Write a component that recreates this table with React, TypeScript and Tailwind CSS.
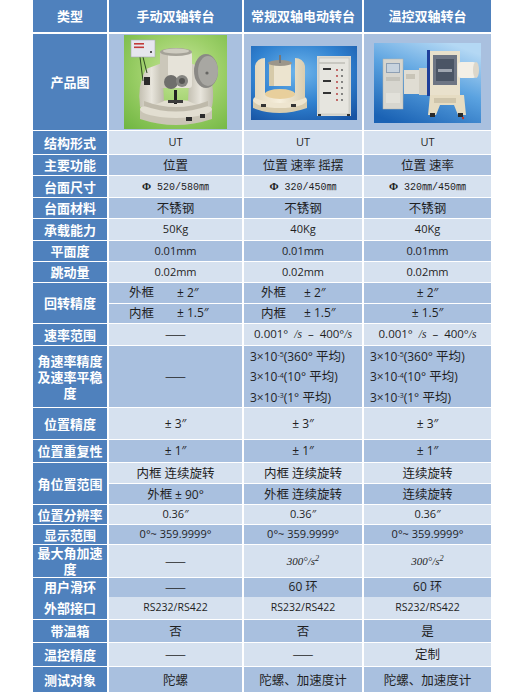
import React from "react";

type Tone = "light" | "dark";

const toneBg: Record<Tone, string> = {
	light: "bg-[#d6e1ef]",
	dark: "bg-[#a9c0df]",
};

function Label({ children }: { children: React.ReactNode }) {
	return (
		<div className="bg-[#4f81bd] text-white font-bold text-[13px] leading-[16px] flex items-center justify-center text-center px-[3px] font-['Noto_Sans_CJK_SC',sans-serif]">
			{children}
		</div>
	);
}

function Cell({
	tone,
	children,
	className = "",
}: {
	tone: Tone;
	children?: React.ReactNode;
	className?: string;
}) {
	return (
		<div className={`${toneBg[tone]} flex items-center justify-center text-[#1f1f1f] whitespace-nowrap ${className}`}>
			{children}
		</div>
	);
}

// a data column cut into two stacked cells
function Split({ tones, items, className = "" }: { tones: [Tone, Tone]; items: [React.ReactNode, React.ReactNode]; className?: string }) {
	return (
		<div className="flex flex-col gap-px">
			<Cell tone={tones[0]} className={`flex-1 ${className}`}>{items[0]}</Cell>
			<Cell tone={tones[1]} className={`flex-1 ${className}`}>{items[1]}</Cell>
		</div>
	);
}

function Row({ h, label, children }: { h: string; label: React.ReactNode; children: React.ReactNode }) {
	return (
		<div className={`grid grid-cols-[74px_133px_118px_127px] gap-x-[2px] ${h}`}>
			<Label>{label}</Label>
			{children}
		</div>
	);
}

const cjk = "text-[12.5px] font-['Noto_Sans_CJK_SC',sans-serif]";
const num = "text-[11px]";
const mono = "text-[10px] font-['Liberation_Mono','Noto_Sans_CJK_SC',monospace]";

function Phi({ text }: { text: string }) {
	return (
		<span className={mono}>
			<span className="font-bold font-['Liberation_Serif',serif] text-[11px]">Φ</span> {text}
		</span>
	);
}

function Frame({ side, value, gapClass }: { side: string; value: string; gapClass: string }) {
	return (
		<div className="w-full flex items-center">
			<span className={`${cjk} ${gapClass}`}>{side}</span>
			<span className="text-[12px]">{value}</span>
		</div>
	);
}

function Rate() {
	return (
		<span className="text-[11.5px] whitespace-pre">
			0.001°  <span className="italic font-['Liberation_Serif',serif]">/s</span>  –  400°<span className="italic font-['Liberation_Serif',serif]">/s</span>
		</span>
	);
}

function Acc() {
	return (
		<span className="text-[11px] italic font-['Liberation_Serif',serif]">
			300°/s<sup>2</sup>
		</span>
	);
}

function Stab() {
	return (
		<div className="w-full flex flex-col justify-center gap-[4px] text-[12px] leading-[15.5px] pl-[6px]">
			<span>3×10<sup className="text-[7px]">-5</sup>(360° <span className={cjk}>平均</span>)</span>
			<span>3×10<sup className="text-[7px]">-4</sup>(10° <span className={cjk}>平均</span>)</span>
			<span>3×10<sup className="text-[7px]">-3</sup>(1° <span className={cjk}>平均</span>)</span>
		</div>
	);
}

function ManualTable() {
	return (
		<svg width="103" height="94" viewBox="0 0 103 94">
			<defs>
				<radialGradient id="g1" cx="0.55" cy="0.4" r="0.8">
					<stop offset="0" stopColor="#c9e79d" />
					<stop offset="0.5" stopColor="#9ccf68" />
					<stop offset="1" stopColor="#70b641" />
				</radialGradient>
				<linearGradient id="m1" x1="0" y1="0" x2="1" y2="0">
					<stop offset="0" stopColor="#c4c0b2" />
					<stop offset="0.5" stopColor="#e8e5dc" />
					<stop offset="1" stopColor="#bdb9ab" />
				</linearGradient>
			</defs>
			<rect width="103" height="94" fill="url(#g1)" />
			{/* base */}
			<path d="M16 74 L16 84 Q52 96 88 84 L88 74 Z" fill="#cac5b6" />
			<ellipse cx="52" cy="74" rx="36" ry="9" fill="#e2ded1" />
			<rect x="62" y="82" width="6" height="4" fill="#2c2c2c" />
			<rect x="76" y="79" width="5" height="4" fill="#2c2c2c" />
			{/* yoke */}
			<path d="M16 72 Q13 50 22 34 L38 28 L40 66 Q30 71 16 72 Z" fill="url(#m1)" />
			<path d="M88 72 Q92 50 82 34 L66 28 L64 66 Q74 71 88 72 Z" fill="url(#m1)" />
			<path d="M20 66 Q52 78 84 66 L84 71 Q52 82 20 71 Z" fill="#bfbaab" />
			{/* inner gimbal */}
			<rect x="36" y="17" width="32" height="36" rx="3" fill="#e6e3d9" />
			<rect x="36" y="17" width="8" height="36" fill="#cbc7ba" />
			<ellipse cx="52" cy="17" rx="16" ry="4" fill="#a5a298" />
			<ellipse cx="52" cy="16" rx="13" ry="2.6" fill="#cfccc1" />
			{/* gear motor */}
			<circle cx="47" cy="47" r="7" fill="#6f6f6c" />
			<circle cx="58" cy="46" r="6" fill="#868682" />
			<circle cx="58" cy="46" r="3" fill="#555553" />
			<rect x="50" y="55" width="3" height="14" fill="#222" />
			<rect x="44" y="65" width="15" height="3" fill="#3c3c3c" />
			{/* right disc */}
			<ellipse cx="82" cy="36" rx="12" ry="17" fill="#8a8985" />
			<ellipse cx="84" cy="36" rx="10" ry="15" fill="#a8a7a2" />
			<circle cx="83" cy="38" r="1.6" fill="#666663" />
			{/* left side parts */}
			<rect x="20" y="42" width="6" height="8" fill="#2a2a2a" />
			{/* controller */}
			<line x1="16" y1="22" x2="19" y2="46" stroke="#2f4a22" strokeWidth="1" />
			<line x1="19" y1="22" x2="23" y2="38" stroke="#2f4a22" strokeWidth="1" />
			<rect x="7" y="5" width="24" height="17" fill="#e6e6ee" stroke="#a9a9b4" strokeWidth="0.6" />
			<rect x="10" y="8" width="10" height="1.6" fill="#c23a3a" />
			<rect x="10" y="11.5" width="10" height="1.6" fill="#c23a3a" />
			<circle cx="27" cy="17" r="1" fill="#222" />
		</svg>
	);
}

function ElectricTable() {
	return (
		<svg width="106" height="74" viewBox="0 0 106 74">
			<defs>
				<radialGradient id="g2" cx="0.45" cy="0.35" r="0.8">
					<stop offset="0" stopColor="#6fb6ec" />
					<stop offset="0.55" stopColor="#2f80cf" />
					<stop offset="1" stopColor="#1753a3" />
				</radialGradient>
				<linearGradient id="m2" x1="0" y1="0" x2="1" y2="0">
					<stop offset="0" stopColor="#e4d8bc" />
					<stop offset="0.5" stopColor="#f6efdd" />
					<stop offset="1" stopColor="#d9cdb0" />
				</linearGradient>
			</defs>
			<rect width="106" height="74" fill="url(#g2)" />
			{/* turntable */}
			<path d="M2 54 L2 62 Q28 72 56 62 L56 54 Z" fill="#d8ccae" />
			<ellipse cx="29" cy="54" rx="27" ry="8" fill="#eee5cf" />
			<path d="M4 52 L4 20 Q6 12 14 12 L14 48 Q29 56 44 48 L44 12 Q52 12 54 20 L54 52 Q29 62 4 52 Z" fill="url(#m2)" />
			<ellipse cx="29" cy="48" rx="15" ry="5" fill="#e8cf9c" />
			<rect x="18" y="18" width="22" height="22" fill="#ece4cf" />
			<rect x="18" y="18" width="5" height="22" fill="#d6caa9" />
			<ellipse cx="29" cy="17" rx="12" ry="3" fill="#9c968a" />
			<rect x="28" y="9" width="2" height="8" fill="#777" />
			<rect x="10" y="58" width="5" height="3" fill="#333" />
			<rect x="40" y="58" width="5" height="3" fill="#333" />
			{/* cabinet */}
			<rect x="66" y="10" width="34" height="60" fill="#d9d8d2" />
			<rect x="68" y="12" width="30" height="56" fill="#e6e5df" stroke="#b9b8b1" strokeWidth="0.5" />
			<rect x="72" y="22" width="8" height="2" fill="#333" />
			<rect x="72" y="34" width="8" height="2" fill="#333" />
			<rect x="72" y="46" width="8" height="2" fill="#333" />
			{[24, 30, 36, 42, 48, 54].map((y) => (
				<g key={y}>
					<circle cx="86" cy={y} r="0.9" fill="#b03030" />
					<circle cx="91" cy={y} r="0.9" fill="#555" />
				</g>
			))}
			<rect x="68" y="16" width="26" height="2" fill="#c9c8c1" />
			<rect x="67" y="68" width="3" height="2" fill="#333" />
			<rect x="96" y="68" width="3" height="2" fill="#333" />
		</svg>
	);
}

function ChamberTable() {
	return (
		<svg width="107" height="80" viewBox="0 0 107 80">
			<defs>
				<linearGradient id="g3" x1="0.7" y1="0" x2="0.2" y2="1">
					<stop offset="0" stopColor="#b4d8f4" />
					<stop offset="0.45" stopColor="#5aa2e0" />
					<stop offset="1" stopColor="#1a62b4" />
				</linearGradient>
			</defs>
			<rect width="107" height="80" fill="url(#g3)" />
			{/* rack */}
			<rect x="9" y="16" width="20" height="50" fill="#d7d6cf" stroke="#b3b2ab" strokeWidth="0.5" />
			<rect x="12" y="20" width="14" height="10" fill="#8ea0b4" />
			<rect x="13" y="21" width="12" height="8" fill="#c7d3de" />
			<rect x="12" y="34" width="14" height="4" fill="#c4c3bb" />
			<rect x="12" y="50" width="14" height="10" fill="#e2e1da" />
			{/* middle cabinet */}
			<rect x="30" y="27" width="15" height="24" fill="#e0ddd3" />
			<rect x="32" y="31" width="9" height="5" fill="#c8c4b7" />
			<rect x="45" y="25" width="10" height="27" fill="#d3cfc3" />
			{/* chamber */}
			<rect x="53" y="7" width="3" height="46" fill="#1f3f9a" />
			<rect x="56" y="8" width="30" height="44" fill="#e9e1cc" />
			<rect x="59" y="12" width="24" height="30" fill="#6d7584" />
			<rect x="62" y="16" width="18" height="22" fill="#4b5565" />
			<rect x="64" y="26" width="14" height="3" fill="#a0a6b0" />
			{/* cylinder */}
			<rect x="84" y="19" width="18" height="16" rx="3" fill="#f3efe6" />
			<ellipse cx="102" cy="27" rx="3" ry="8" fill="#ddd7ca" />
			{/* stand */}
			<path d="M56 52 L90 52 L92 72 L84 72 L80 62 L66 62 L62 72 L54 72 Z" fill="#e6dcc2" />
			<rect x="60" y="55" width="22" height="5" fill="#cfc5ab" />
			<rect x="56" y="70" width="5" height="4" fill="#2a2a2a" />
			<rect x="84" y="70" width="5" height="4" fill="#2a2a2a" />
			<circle cx="89" cy="75" r="1.2" fill="#c03a2a" />
		</svg>
	);
}

export default function App() {
	return (
		<div className="w-[520px] h-[692px] bg-white overflow-hidden font-['Open_Sans','Noto_Sans_CJK_SC',sans-serif]">
			<div className="ml-[33px] w-[458px] flex flex-col gap-px">
				<div className="grid grid-cols-[74px_133px_118px_127px] gap-x-[2px] h-[32px] mb-px">
					{["类型", "手动双轴转台", "常规双轴电动转台", "温控双轴转台"].map((t) => (
						<Label key={t}>{t}</Label>
					))}
				</div>

				<Row h="h-[96px]" label="产品图">
					<Cell tone="dark" className="items-start pt-px">
						<ManualTable />
					</Cell>
					<Cell tone="dark" className="justify-start pl-[7px] pt-[2px]">
						<ElectricTable />
					</Cell>
					<Cell tone="dark" className="justify-start pl-[10px] pt-[1px]">
						<ChamberTable />
					</Cell>
				</Row>

				<Row h="h-[23px]" label="结构形式">
					<Cell tone="light" className={num}>UT</Cell>
					<Cell tone="light" className={num}>UT</Cell>
					<Cell tone="light" className={num}>UT</Cell>
				</Row>
				<Row h="h-[20px]" label="主要功能">
					<Cell tone="dark" className={cjk}>位置</Cell>
					<Cell tone="dark" className={cjk}>位置 速率 摇摆</Cell>
					<Cell tone="dark" className={cjk}>位置 速率</Cell>
				</Row>
				<Row h="h-[21px]" label="台面尺寸">
					<Cell tone="light"><Phi text="520/580㎜" /></Cell>
					<Cell tone="light"><Phi text="320/450㎜" /></Cell>
					<Cell tone="light"><Phi text="320㎜/450㎜" /></Cell>
				</Row>
				<Row h="h-[20px]" label="台面材料">
					<Cell tone="dark" className={cjk}>不锈钢</Cell>
					<Cell tone="dark" className={cjk}>不锈钢</Cell>
					<Cell tone="dark" className={cjk}>不锈钢</Cell>
				</Row>
				<Row h="h-[21px]" label="承载能力">
					<Cell tone="light" className={num}>50Kg</Cell>
					<Cell tone="light" className={num}>40Kg</Cell>
					<Cell tone="light" className={num}>40Kg</Cell>
				</Row>
				<Row h="h-[20px]" label="平面度">
					<Cell tone="dark" className={num}>0.01mm</Cell>
					<Cell tone="dark" className={num}>0.01mm</Cell>
					<Cell tone="dark" className={num}>0.01mm</Cell>
				</Row>
				<Row h="h-[20px]" label="跳动量">
					<Cell tone="light" className={num}>0.02mm</Cell>
					<Cell tone="light" className={num}>0.02mm</Cell>
					<Cell tone="light" className={num}>0.02mm</Cell>
				</Row>
				<Row h="h-[40px]" label="回转精度">
					<Split
						tones={["dark", "dark"]}
						className="pl-[20px]"
						items={[
							<Frame side="外框" value="± 2″" gapClass="mr-[23px]" />,
							<Frame side="内框" value="± 1.5″" gapClass="mr-[23px]" />,
						]}
					/>
					<Split
						tones={["dark", "dark"]}
						className="pl-[17px]"
						items={[
							<Frame side="外框" value="± 2″" gapClass="mr-[18px]" />,
							<Frame side="内框" value="± 1.5″" gapClass="mr-[18px]" />,
						]}
					/>
					<Split
						tones={["dark", "dark"]}
						className="text-[12px]"
						items={["± 2″", "± 1.5″"]}
					/>
				</Row>
				<Row h="h-[21px]" label="速率范围">
					<Cell tone="light" className={cjk}>——</Cell>
					<Cell tone="light"><Rate /></Cell>
					<Cell tone="light"><Rate /></Cell>
				</Row>
				<Row h="h-[61px]" label={<span>角速率精度<br />及速率平稳<br />度</span>}>
					<Cell tone="dark" className={cjk}>——</Cell>
					<Cell tone="dark"><Stab /></Cell>
					<Cell tone="dark"><Stab /></Cell>
				</Row>
				<Row h="h-[31px]" label="位置精度">
					<Cell tone="light" className="text-[12px]">± 3″</Cell>
					<Cell tone="light" className="text-[12px]">± 3″</Cell>
					<Cell tone="light" className="text-[12px]">± 3″</Cell>
				</Row>
				<Row h="h-[22px]" label="位置重复性">
					<Cell tone="dark" className="text-[12px]">± 1″</Cell>
					<Cell tone="dark" className="text-[12px]">± 1″</Cell>
					<Cell tone="dark" className="text-[12px]">± 1″</Cell>
				</Row>
				<Row h="h-[41px]" label="角位置范围">
					<Split
						tones={["light", "dark"]}
						className={cjk}
						items={["内框  连续旋转", <span>外框 <span className="text-[12px] font-['Open_Sans',sans-serif]">± 90°</span></span>]}
					/>
					<Split tones={["light", "dark"]} className={cjk} items={["内框  连续旋转", "外框  连续旋转"]} />
					<Split tones={["light", "dark"]} className={cjk} items={["连续旋转", "连续旋转"]} />
				</Row>
				<Row h="h-[19px]" label="位置分辨率">
					<Cell tone="light" className={num}>0.36″</Cell>
					<Cell tone="light" className={num}>0.36″</Cell>
					<Cell tone="light" className={num}>0.36″</Cell>
				</Row>
				<Row h="h-[19px]" label="显示范围">
					<Cell tone="dark" className={num}>0°~ 359.9999°</Cell>
					<Cell tone="dark" className={num}>0°~ 359.9999°</Cell>
					<Cell tone="dark" className={num}>0°~ 359.9999°</Cell>
				</Row>
				<Row h="h-[32px]" label={<span>最大角加速<br />度</span>}>
					<Cell tone="light" className={cjk}>——</Cell>
					<Cell tone="light"><Acc /></Cell>
					<Cell tone="light"><Acc /></Cell>
				</Row>
				<Row h="h-[18px]" label="用户滑环">
					<Cell tone="dark" className={cjk}>——</Cell>
					<Cell tone="dark" className="text-[12px]">60 环</Cell>
					<Cell tone="dark" className="text-[12px]">60 环</Cell>
				</Row>
				<Row h="h-[22px]" label="外部接口">
					<Cell tone="light" className="text-[10.5px]">RS232/RS422</Cell>
					<Cell tone="light" className="text-[10.5px]">RS232/RS422</Cell>
					<Cell tone="light" className="text-[10.5px]">RS232/RS422</Cell>
				</Row>
				<Row h="h-[22px]" label="带温箱">
					<Cell tone="dark" className={cjk}>否</Cell>
					<Cell tone="dark" className={cjk}>否</Cell>
					<Cell tone="dark" className={cjk}>是</Cell>
				</Row>
				<Row h="h-[23px]" label="温控精度">
					<Cell tone="light" className={cjk}>——</Cell>
					<Cell tone="light" className={cjk}>——</Cell>
					<Cell tone="light" className={cjk}>定制</Cell>
				</Row>
				<Row h="h-[26px]" label="测试对象">
					<Cell tone="dark" className={cjk}>陀螺</Cell>
					<Cell tone="dark" className={cjk}>陀螺、加速度计</Cell>
					<Cell tone="dark" className={cjk}>陀螺、加速度计</Cell>
				</Row>
			</div>
		</div>
	);
}
